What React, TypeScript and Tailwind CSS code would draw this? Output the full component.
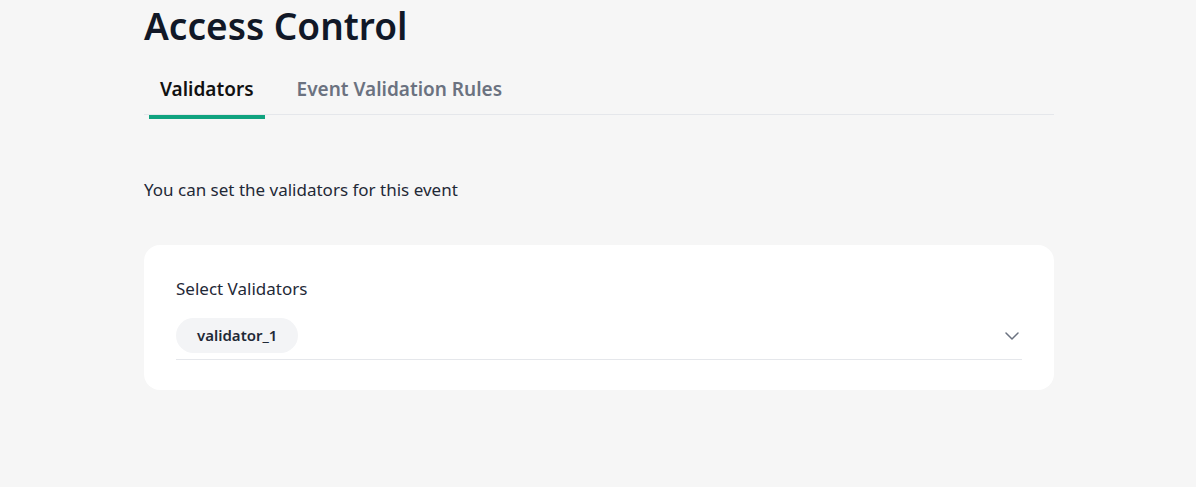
import React, { useState } from "react";
import { ChevronDown } from "lucide-react";

const TABS = [
  { id: "validators", label: "Validators" },
  { id: "rules", label: "Event Validation Rules" },
] as const;

type TabId = (typeof TABS)[number]["id"];

const ValidatorSelect: React.FC<{ selected: string[] }> = ({ selected }) => {
  return (
    <div className="flex items-center justify-between border-b border-[#e5e7eb] pb-[6px]">
      <div className="flex flex-wrap gap-2">
        {selected.map((v) => (
          <span
            key={v}
            className="flex h-[35px] items-center rounded-full bg-[#f3f4f6] px-[21px] text-[15px] font-semibold text-[#1f2937]"
          >
            {v}
          </span>
        ))}
      </div>
      <ChevronDown size={24} strokeWidth={1.5} className="-mr-[2px] text-[#6b7280]" />
    </div>
  );
};

export default function App() {
  const [activeTab, setActiveTab] = useState<TabId>("validators");

  return (
    <div
      className="flex min-h-screen justify-center bg-[#f6f6f6] pl-[2px] text-[#111827]"
      style={{ fontFamily: '"Noto Sans", "Open Sans", sans-serif' }}
    >
      <div className="w-[910px]">
        <h1 className="mt-[2px] text-[37px] leading-[48px] font-semibold text-[#111827]">
          Access Control
        </h1>

        {/* Tabs */}
        <div className="mt-[25px] flex gap-[21px] border-b border-[#e5e7eb] pl-[5px]">
          {TABS.map((tab) => {
            const isActive = tab.id === activeTab;
            return (
              <button
                key={tab.id}
                onClick={() => setActiveTab(tab.id)}
                className={`relative px-[11px] pb-[11px] text-[19px] leading-[28px] font-semibold ${
                  isActive ? "text-[#111111]" : "text-[#6b7280]"
                }`}
              >
                {tab.label}
                {isActive && (
                  <span className="absolute right-0 -bottom-[5px] left-0 h-1 bg-[#10a37f]" />
                )}
              </button>
            );
          })}
        </div>

        <p className="mt-[63px] text-[17px] leading-6 text-[#1f2937]">
          You can set the validators for this event
        </p>

        <div className="mt-[43px] rounded-2xl bg-white px-8 pt-8 pb-[30px]">
          <div className="text-[17px] leading-6 text-[#1f2937]">Select Validators</div>
          <div className="mt-[17px]">
            <ValidatorSelect selected={["validator_1"]} />
          </div>
        </div>
      </div>
    </div>
  );
}
